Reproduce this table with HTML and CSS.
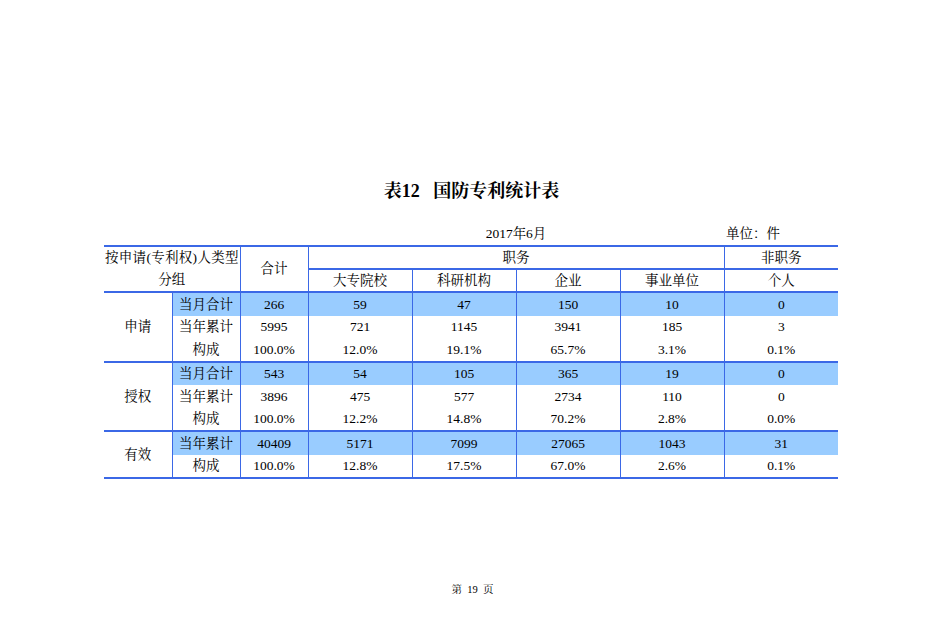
FILE: index.html
```html
<!DOCTYPE html>
<html lang="zh-CN">
<head>
<meta charset="utf-8">
<title>表12 国防专利统计表</title>
<link rel="stylesheet" href="styles.css">
</head>
<body>
<div class="page">
  <h1 class="title">表12&nbsp;&nbsp; 国防专利统计表</h1>
  <table class="stats">
    <colgroup>
      <col class="w68"><col class="w68"><col class="w68">
      <col class="w104"><col class="w104"><col class="w104"><col class="w104">
      <col class="w114">
    </colgroup>
    <thead>
      <tr class="cap">
        <td colspan="3"></td>
        <td colspan="4">2017年6月</td>
        <td class="unit">单位：件</td>
      </tr>
      <tr class="h1">
        <th colspan="2" class="top-only">按申请(专利权)人类型</th>
        <th rowspan="2" class="sep hb">合计</th>
        <th colspan="4" class="sep hb">职务</th>
        <th class="sep hb">非职务</th>
      </tr>
      <tr class="h2">
        <th colspan="2" class="hb">分组</th>
        <th class="sep hb">大专院校</th>
        <th class="sep hb">科研机构</th>
        <th class="sep hb">企业</th>
        <th class="sep hb">事业单位</th>
        <th class="sep hb">个人</th>
      </tr>
    </thead>
    <tbody class="body">
      <tr class="hl">
        <td rowspan="3" class="g">申请</td>
        <td>当月合计</td><td>266</td><td>59</td><td>47</td><td>150</td><td>10</td><td>0</td>
      </tr>
      <tr>
        <td>当年累计</td><td>5995</td><td>721</td><td>1145</td><td>3941</td><td>185</td><td>3</td>
      </tr>
      <tr>
        <td>构成</td><td>100.0%</td><td>12.0%</td><td>19.1%</td><td>65.7%</td><td>3.1%</td><td>0.1%</td>
      </tr>

      <tr class="hl gs">
        <td rowspan="3" class="g">授权</td>
        <td>当月合计</td><td>543</td><td>54</td><td>105</td><td>365</td><td>19</td><td>0</td>
      </tr>
      <tr>
        <td>当年累计</td><td>3896</td><td>475</td><td>577</td><td>2734</td><td>110</td><td>0</td>
      </tr>
      <tr>
        <td>构成</td><td>100.0%</td><td>12.2%</td><td>14.8%</td><td>70.2%</td><td>2.8%</td><td>0.0%</td>
      </tr>

      <tr class="hl gs">
        <td rowspan="2" class="g last">有效</td>
        <td>当年累计</td><td>40409</td><td>5171</td><td>7099</td><td>27065</td><td>1043</td><td>31</td>
      </tr>
      <tr class="end">
        <td>构成</td><td>100.0%</td><td>12.8%</td><td>17.5%</td><td>67.0%</td><td>2.6%</td><td>0.1%</td>
      </tr>
    </tbody>
  </table>
  <p class="footer">第&nbsp; 19&nbsp; 页</p>
</div>
</body>
</html>
```
FILE: styles.css
```css
html, body {
  margin: 0;
  padding: 0;
  background: #ffffff;
}

.page {
  width: 945px;
  height: 644px;
  overflow: hidden;
  font-family: "Liberation Serif", "Noto Serif CJK SC", "Noto Sans CJK SC", serif;
  color: #000;
}

.title {
  margin: 179px 0 0 0;
  height: 24px;
  line-height: 24px;
  font-size: 18px;
  font-weight: bold;
  text-align: center;
  padding-right: 2px;
}

.stats {
  margin: 19px 0 0 104px;
  width: 734px;
  table-layout: fixed;
  border-collapse: collapse;
  font-size: 13.5px;
}

.w68 { width: 68px; }
.w104 { width: 104px; }
.w114 { width: 114px; }

.stats td,
.stats th {
  padding: 0;
  height: 21px;
  line-height: 20px;
  text-align: center;
  vertical-align: middle;
  font-weight: normal;
  border: none;
  white-space: nowrap;
}

.stats .cap td {
  height: 23px;
}

.stats .cap .unit {
  text-align: left;
  padding-left: 2px;
}

/* header */
.stats .h1 th {
  border-top: 2px solid #3b68e6;
  height: 21px;
}

.stats .h2 th {
  height: 21px;
}

.stats th.sep {
  border-left: 1.5px solid #3b68e6;
}

.stats th.hb {
  border-bottom: 2px solid #3b68e6;
}

.stats th.top-only {
  text-align: left;
  padding-left: 1px;
  letter-spacing: 0.3px;
}

/* body */
.body td {
  border-left: 1.5px solid #3b68e6;
  height: 22.5px;
  line-height: 21px;
}

.body td.g {
  border-left: none;
  background: #ffffff;
}

.body .hl td {
  background: #99ccff;
}

.body .hl td.g {
  background: #ffffff;
}

.body .gs td {
  border-top: 2px solid #3b68e6;
}

.body .end td,
.body td.last {
  border-bottom: 2px solid #3b68e6;
}

.footer {
  margin: 104px 0 0 0;
  font-size: 10.5px;
  line-height: 14px;
  text-align: center;
}
```
